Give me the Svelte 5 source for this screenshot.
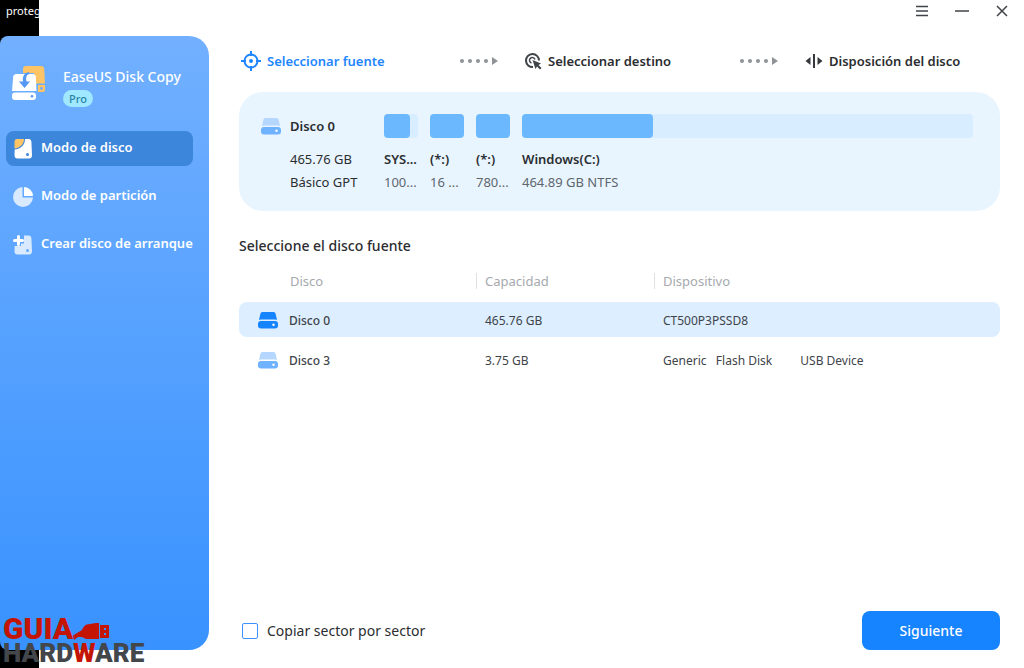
<script lang="ts">
	const modes = [
		{ id: 'disk', label: 'Modo de disco' },
		{ id: 'partition', label: 'Modo de partición' },
		{ id: 'boot', label: 'Crear disco de arranque' }
	];

	const steps = [
		{ id: 'source', label: 'Seleccionar fuente' },
		{ id: 'target', label: 'Seleccionar destino' },
		{ id: 'layout', label: 'Disposición del disco' }
	];

	const partitions = [
		{ name: 'SYSTEM', info: '100 MB FAT32', used: 76, wide: false },
		{ name: '(*:)', info: '16 MB Otro', used: 100, wide: false },
		{ name: '(*:)', info: '780 MB NTFS', used: 100, wide: false },
		{ name: 'Windows(C:)', info: '464.89 GB NTFS', used: 29, wide: true }
	];

	const disks = [
		{ id: 0, name: 'Disco 0', capacity: '465.76 GB', device: 'CT500P3PSSD8' },
		{ id: 3, name: 'Disco 3', capacity: '3.75 GB', device: 'Generic   Flash Disk         USB Device' }
	];

	// narrow partitions only have room for a few characters
	function shorten(text: string, wide: boolean, max: number) {
		if (wide || text.length <= max + 1) return text;
		return text.slice(0, max) + '...';
	}

	let mode = $state('disk');
	let selected = $state(0);
	let sectorCopy = $state(false);
</script>

<svelte:head>
	<title>EaseUS Disk Copy</title>
</svelte:head>

{#snippet drive()}
	<svg width="20" height="17" viewBox="0 0 20 17" aria-hidden="true">
		<path class="drive-top" d="M5 0h10c1.500 0 2.300.5 2.600 1.700L19 8q-1-.5-2-.5H3Q2 7.500 1 8l1.400-6.300C2.700.5 3.500 0 5 0z" />
		<rect class="drive-base" y="9" width="20" height="7.500" rx="3" />
		<circle cx="15.500" cy="12.700" r="1.200" fill="#fff" />
	</svg>
{/snippet}

<div class="desktop">
	<div class="backdrop">proteg</div>

	<aside class="sidebar">
		<div class="brand">
			<svg width="36" height="36" viewBox="0 0 36 36" aria-hidden="true">
				<path d="M15 0h15q3 0 3.200 3l.8 14.500H24.500L23 7H12V3q0-3 3-3z" fill="#ffc466" />
				<path d="M27 19h7v4.500q0 2.500-2.500 2.500H27z" fill="#ffc466" />
				<circle cx="30.500" cy="22.500" r="1.400" fill="#6cabff" />
				<path d="M5 8h17q2.500 0 2.800 2.500L25.500 25H1l1.200-14.500Q2.500 8 5 8z" fill="#fff" />
				<path d="M18 6c-5 1-7 5-6 9.500H8l5.500 6.500 5.500-6.500h-3.500C14.500 11 16 8 18.500 8z" fill="#5598f3" />
				<rect x="1" y="26.500" width="24" height="7.500" rx="3" fill="#fff" />
				<circle cx="21" cy="30.300" r="1.300" fill="#5598f3" />
			</svg>
			<div>
				<div class="brand-name">EaseUS Disk Copy</div>
				<span class="badge">Pro</span>
			</div>
		</div>

		<nav>
			{#each modes as item (item.id)}
				<button class="mode" class:active={mode === item.id} onclick={() => (mode = item.id)}>
					<svg width="20" height="20" viewBox="0 0 20 20" aria-hidden="true">
						{#if item.id === 'disk'}
							<path d="M12 0h4q2.200 0 2.400 2.500L19 16q0 3.500-3 3.500H4.500q-3 0-3-3.500l.2-5.500C8 10 12 6 12 0z" fill="#fff" />
							<path d="M4 0h7C11 5 7 9 1.500 9.500V3Q1.500 0 4 0z" fill="#ffc466" />
							<circle cx="14.500" cy="15.500" r="1.500" fill="#3c86dc" />
						{:else if item.id === 'partition'}
							<path d="M9.500 0v10.500H20A10 10 0 1 1 9.500 0z" fill="#d9eaff" />
							<path d="M11 0a9 9 0 0 1 9 9h-9z" fill="#fff" />
						{:else}
							<path d="M11 .5h5q2.200 0 2.400 2.500L19 16q0 3.500-3 3.500H4.500q-3 0-3-3.500l.2-5H8V8.500h3z" fill="#d9eaff" />
							<path d="M5.500 1.500v8M1.500 5.500h8" stroke="#fff" stroke-width="3" stroke-linecap="round" />
							<circle cx="14.500" cy="15.500" r="1.500" fill="#65a8ff" />
						{/if}
					</svg>
					<span>{item.label}</span>
				</button>
			{/each}
		</nav>
	</aside>

	<main>
		<div class="titlebar">
			<button aria-label="Menú">
				<svg width="14" height="14" viewBox="0 0 14 14"><path d="M1 2.500h12M1 7h12M1 11.500h12" /></svg>
			</button>
			<button aria-label="Minimizar">
				<svg width="14" height="14" viewBox="0 0 14 14"><path d="M0 7h14" /></svg>
			</button>
			<button aria-label="Cerrar">
				<svg width="14" height="14" viewBox="0 0 14 14"><path d="M2 2l10 10M12 2L2 12" /></svg>
			</button>
		</div>

		<ol class="steps">
			{#each steps as step, i (step.id)}
				<li class:current={i === 0}>
					<span class="step">
						{#if step.id === 'source'}
							<svg width="20" height="20" viewBox="0 0 20 20" fill="none" stroke="currentColor" stroke-width="2" aria-hidden="true">
								<circle cx="10" cy="10" r="6.500" />
								<path d="M10 0v5M10 15v5M0 10h5M15 10h5" />
								<circle cx="10" cy="10" r="2" fill="currentColor" stroke="none" />
							</svg>
						{:else if step.id === 'target'}
							<svg width="17" height="17" viewBox="0 0 17 17" fill="none" stroke="#404449" stroke-width="2" aria-hidden="true">
								<path d="M14 7.500A6.500 6.500 0 1 0 8 14" />
								<path d="M10 6.500A2.800 2.800 0 1 0 6.500 10" stroke-width="1.500" />
								<path d="M7.500 7l8.500 3.500-2.500 1.500 3 3-1.500 1.500-3-3-1.500 2.500z" fill="#404449" stroke="none" />
							</svg>
						{:else}
							<svg width="18" height="16" viewBox="0 0 18 16" fill="#35383d" aria-hidden="true">
								<path d="M5.500 4v8L.5 8zM12.500 4v8l5-4zM8 1h2v14H8z" />
							</svg>
						{/if}
						{step.label}
					</span>
					{#if i < steps.length - 1}
						<svg width="38" height="10" viewBox="0 0 38 10" fill="#8f9397" aria-hidden="true">
							<circle cx="2" cy="5" r="2" />
							<circle cx="10" cy="5" r="2" />
							<circle cx="18" cy="5" r="2" />
							<circle cx="26" cy="5" r="2" />
							<path d="M32 1l6 4-6 4z" />
						</svg>
					{/if}
				</li>
			{/each}
		</ol>

		<section class="disk-card">
			<div class="card-icon">{@render drive()}</div>
			<div class="disk-info">
				<strong>Disco 0</strong>
				<span>465.76 GB</span>
				<span>Básico GPT</span>
			</div>
			<div class="partitions">
				{#each partitions as part}
					<div class="partition" class:wide={part.wide}>
						<div class="bar"><div class="used" style="width: {part.used}%"></div></div>
						<strong>{shorten(part.name, part.wide, 3)}</strong>
						<span>{shorten(part.info, part.wide, 3)}</span>
					</div>
				{/each}
			</div>
		</section>

		<h2>Seleccione el disco fuente</h2>

		<table>
			<thead>
				<tr>
					<th class="col-disk">Disco</th>
					<th class="col-capacity"><span>Capacidad</span></th>
					<th><span>Dispositivo</span></th>
				</tr>
			</thead>
			<tbody>
				{#each disks as disk (disk.id)}
					<tr class:selected={selected === disk.id} onclick={() => (selected = disk.id)}>
						<td><div class="disk-name">{@render drive()}{disk.name}</div></td>
						<td>{disk.capacity}</td>
						<td class="device">{disk.device}</td>
					</tr>
				{/each}
			</tbody>
		</table>

		<footer>
			<label>
				<input type="checkbox" bind:checked={sectorCopy} />
				Copiar sector por sector
			</label>
			<button class="next">Siguiente</button>
		</footer>
	</main>

	<div class="watermark">
		<div class="guia">
			<span>GUIA</span>
			<svg width="37" height="18" viewBox="0 0 37 18" aria-hidden="true">
				<path d="M0 12.500L9 7q2-5 5-5.500L23 0h3v16H13l-4-2H5l-4 3z" />
				<path d="M27 2h9v13h-9zM31 5v2h2V5zM31 10v2h2v-2z" fill-rule="evenodd" />
			</svg>
		</div>
		<div class="hardware">HARD<span>W</span>ARE</div>
	</div>
</div>

<style>
	:global(body) {
		margin: 0;
		background: #fff;
	}

	.desktop {
		position: relative;
		display: flex;
		min-height: 100vh;
		font-family: 'Noto Sans', 'Open Sans', sans-serif;
		font-size: 13px;
		color: #2b2d30;
	}

	button {
		border: 0;
		padding: 0;
		background: none;
		font: inherit;
		cursor: pointer;
	}

	svg {
		flex: none;
		display: block;
	}

	/* the strip of desktop that shows behind the window */
	.backdrop {
		position: absolute;
		top: 0;
		bottom: 0;
		left: 0;
		width: 33px;
		padding: 3px 0 0 6px;
		overflow: hidden;
		background: #000;
		color: #fff;
		font-size: 11px;
		line-height: 15px;
	}

	.sidebar {
		position: relative;
		flex: none;
		box-sizing: border-box;
		width: 209px;
		margin: 36px 0 18px;
		padding: 30px 16px 0 6px;
		border-radius: 8px 20px 20px 8px;
		background: linear-gradient(#72b0ff, #3892ff);
		color: #fff;
	}

	.brand {
		display: flex;
		gap: 16px;
		padding-left: 5px;
		margin-bottom: 24px;
	}

	.brand-name {
		font-size: 14px;
		font-weight: 500;
		line-height: 22px;
		white-space: nowrap;
	}

	.badge {
		display: block;
		width: 30px;
		margin-top: 2px;
		border-radius: 9px;
		background: #a0e8ff;
		color: #2a84a5;
		font-size: 11px;
		font-weight: 500;
		line-height: 17px;
		text-align: center;
	}

	nav {
		display: flex;
		flex-direction: column;
		gap: 13px;
	}

	.mode {
		display: flex;
		align-items: center;
		gap: 8px;
		height: 35px;
		padding-left: 7px;
		border-radius: 8px;
		color: #fff;
		font-weight: 600;
		white-space: nowrap;
	}

	.mode span {
		padding-bottom: 4px;
	}

	.mode.active {
		background: #3c86dc;
	}

	main {
		flex: 1;
		display: flex;
		flex-direction: column;
		min-width: 0;
		padding: 0 24px 18px 30px;
	}

	.titlebar {
		display: flex;
		justify-content: flex-end;
		gap: 26px;
		height: 22px;
		margin-right: -9px;
	}

	.titlebar path {
		fill: none;
		stroke: #404449;
		stroke-width: 1.5;
	}

	.steps {
		display: grid;
		grid-template-columns: 284fr 280fr 195fr;
		margin: 29px 0 21px;
		padding: 0 0 0 2px;
		list-style: none;
		font-weight: 600;
		line-height: 20px;
		white-space: nowrap;
	}

	.steps li {
		display: flex;
		align-items: center;
		justify-content: space-between;
		padding-right: 27px;
	}

	.steps li:last-child {
		padding-right: 0;
	}

	.step {
		display: flex;
		align-items: center;
		gap: 6px;
	}

	.current {
		color: #1f86ff;
	}

	.disk-card {
		display: flex;
		padding: 22px 27px 17px 22px;
		border-radius: 24px;
		background: #e8f5ff;
		line-height: 23px;
		white-space: nowrap;
	}

	.card-icon {
		width: 29px;
		padding-top: 4px;
	}

	.drive-top {
		fill: #b5d6ff;
	}

	.drive-base {
		fill: #6fb2ff;
	}

	.disk-info {
		display: flex;
		flex-direction: column;
		width: 94px;
	}

	strong {
		font-weight: 600;
	}

	.disk-info strong {
		padding-top: 1px;
		margin-bottom: 10px;
	}

	.partitions {
		flex: 1;
		display: flex;
		gap: 12px;
		min-width: 0;
	}

	.partition {
		display: flex;
		flex-direction: column;
		width: 34px;
	}

	.partition.wide {
		flex: 1;
	}

	.partition span {
		color: #5f666d;
	}

	.bar {
		height: 24px;
		margin-bottom: 10px;
		border-radius: 4px;
		background: #d8edff;
	}

	.used {
		height: 100%;
		border-radius: 4px;
		background: #6cb8ff;
	}

	h2 {
		margin: 24px 0 11px;
		font-size: 14px;
		font-weight: 500;
		line-height: 22px;
	}

	table {
		width: 100%;
		table-layout: fixed;
		border-collapse: separate;
		border-spacing: 0 5px;
		margin-top: -5px;
		text-align: left;
	}

	th {
		height: 25px;
		padding: 0 0 4px;
		color: #a5a9ad;
		font-weight: 400;
		line-height: 16px;
	}

	th span {
		display: block;
		padding-left: 8px;
		border-left: 1px solid #dfe2e5;
	}

	.col-disk {
		width: 186px;
		padding-left: 51px;
	}

	.col-capacity {
		width: 178px;
	}

	td {
		height: 35px;
		padding: 1px 0 0 9px;
		box-sizing: border-box;
		color: #404449;
		font-size: 12px;
	}

	td:first-child {
		padding-left: 19px;
		border-radius: 8px 0 0 8px;
	}

	td:last-child {
		border-radius: 0 8px 8px 0;
	}

	.selected td {
		background: #dceeff;
	}

	.disk-name {
		display: flex;
		align-items: center;
		gap: 11px;
		font-weight: 500;
	}

	.selected .drive-top,
	.selected .drive-base {
		fill: #1683ff;
	}

	.device {
		white-space: pre;
	}

	footer {
		display: flex;
		align-items: center;
		justify-content: space-between;
		margin-top: auto;
	}

	label {
		display: flex;
		align-items: center;
		gap: 9px;
		padding-left: 3px;
		font-size: 14px;
	}

	input {
		appearance: none;
		box-sizing: border-box;
		width: 16px;
		height: 16px;
		margin: 0;
		border: 1px solid #3b94ff;
		border-radius: 2px;
		background: #fff;
	}

	input:checked {
		background: #1683ff;
	}

	.next {
		width: 138px;
		height: 39px;
		border-radius: 8px;
		background: #1683ff;
		color: #fff;
		font-size: 14px;
		font-weight: 500;
	}

	.watermark {
		position: absolute;
		left: 3px;
		bottom: 0;
		font-family: Roboto, sans-serif;
		font-weight: 900;
	}

	.guia {
		display: flex;
		align-items: center;
		color: #c41404;
		fill: #c41404;
		font-size: 30px;
		line-height: 30px;
	}

	.guia svg {
		margin-top: 6px;
	}

	.hardware {
		margin-top: -6px;
		color: #43464a;
		font-size: 26px;
		line-height: 30px;
	}

	.hardware span {
		color: #c41404;
	}
</style>
